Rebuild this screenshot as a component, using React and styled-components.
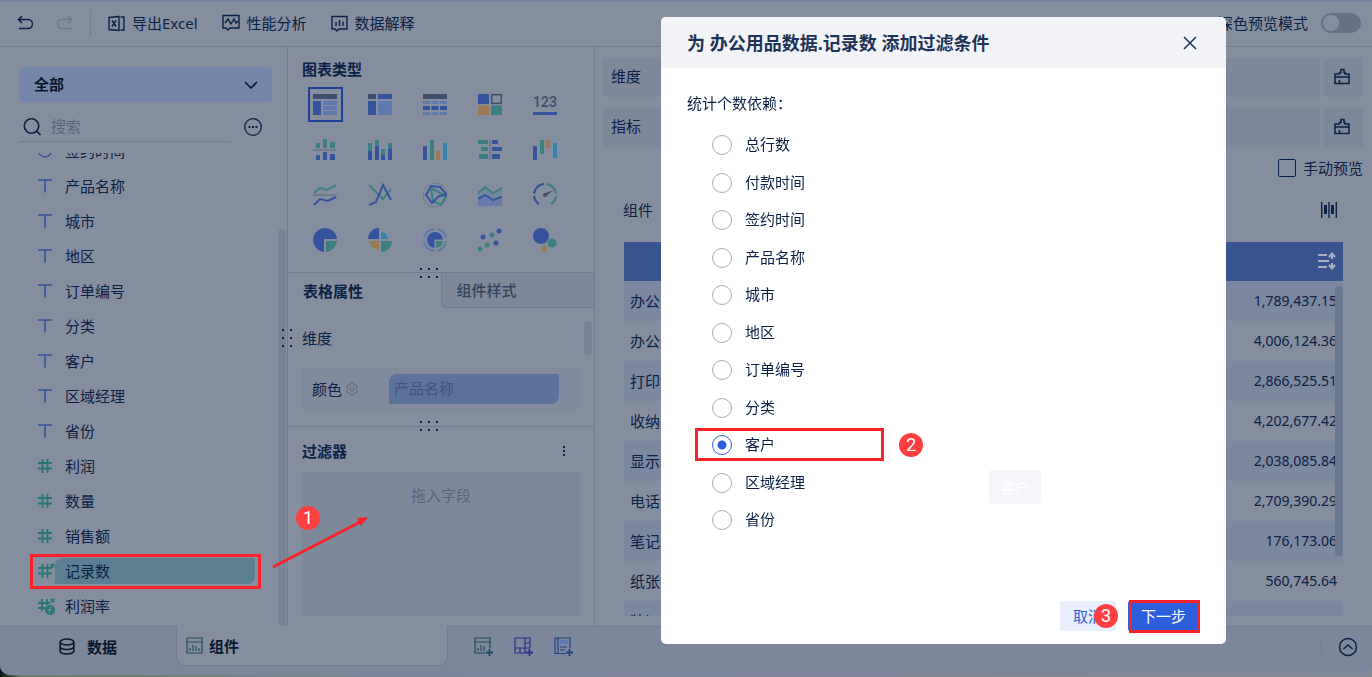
import React, { useState } from 'react';
import styled, { createGlobalStyle } from 'styled-components';

const c = {
  page: '#858e9f',
  sunken: '#7e889b',
  bar: '#7c879b',
  line: '#717d93',
  text: '#0b2146',
  strong: '#08172f',
  muted: '#5f6b83',
  blue: '#35529c',
  light: '#5e78b0',
  teal: '#3b7f82',
  orange: '#9c7a50',
  cyan: '#3683ad',
  slate: '#414e6b',
  gray: '#6f7a90',
  red: '#fa2128',
};

const GlobalStyle = createGlobalStyle`
  * {
    box-sizing: border-box;
  }

  body {
    margin: 0;
    font-family: 'Noto Sans', 'Noto Sans CJK SC', sans-serif;
    font-size: 15px;
    line-height: 20px;
    color: ${c.text};
    background: linear-gradient(90deg, #0a1614, #6d7c6c 20px, #7d8793 400px, #848c92);
  }

  button, input, select {
    font: inherit;
    color: inherit;
  }

  button {
    padding: 0;
    border: 0;
    background: none;
    cursor: pointer;
  }

  svg {
    display: block;
    flex: none;
  }
`;

const Shell = styled.div`
  height: calc(100vh - 2px);
  display: flex;
  flex-direction: column;
  background: ${c.page};
  border-radius: 0 0 10px 10px;
  overflow: hidden;
`;

/* toolbar */

const Toolbar = styled.header`
  height: 47px;
  flex: none;
  display: flex;
  align-items: center;
  gap: 24px;
  padding: 0 11px 2px 17px;
  border-top: 2px solid #7883a0;
  border-bottom: 1px solid ${c.line};
`;

const ToolButton = styled.button`
  display: flex;
  align-items: center;
  gap: 7px;
  color: ${(p) => (p.$off ? c.gray : 'inherit')};
`;

const Divider = styled.span`
  width: 1px;
  height: ${(p) => p.$h || 26}px;
  background: ${c.line};
  margin: 0 ${(p) => p.$m || 0}px;
`;

const SwitchLabel = styled.label`
  margin-left: auto;
  display: flex;
  align-items: center;
  gap: 13px;
  white-space: nowrap;
`;

const Switch = styled.input`
  appearance: none;
  margin: 0;
  width: 40px;
  height: 20px;
  padding: 2px;
  border-radius: 10px;
  background: #667188;

  &::before {
    content: '';
    display: block;
    width: 16px;
    height: 16px;
    border-radius: 50%;
    background: ${c.page};
  }
`;

/* columns */

const Main = styled.main`
  flex: 1;
  min-height: 0;
  display: flex;
`;

const FieldPanel = styled.aside`
  position: relative;
  width: 288px;
  flex: none;
  display: flex;
  flex-direction: column;
  padding: 20px 0 0 19px;
  border-right: 1px solid ${c.line};
`;

const SelectWrap = styled.div`
  display: grid;
  align-items: center;
  width: 253px;
  height: 35px;
  border-radius: 4px;
  background: #7487ab;
  color: ${c.strong};

  > * {
    grid-area: 1 / 1;
  }

  svg {
    justify-self: end;
    margin-right: 14px;
    pointer-events: none;
  }
`;

const Select = styled.select`
  appearance: none;
  height: 35px;
  padding: 0 15px 2px;
  border: 0;
  background: none;
  font-weight: 600;
`;

const SearchRow = styled.div`
  display: flex;
  align-items: center;
  gap: 14px;
  margin-top: 10px;
  height: 30px;
`;

const SearchBox = styled.label`
  width: 211px;
  height: 30px;
  display: flex;
  align-items: center;
  gap: 10px;
  padding-left: 4px;
  border-bottom: 1px solid ${c.line};

  input {
    width: 150px;
    padding: 0 0 2px;
    border: 0;
    outline: 0;
    background: none;
  }

  input::placeholder {
    color: #5a6780;
  }
`;

const FieldView = styled.div`
  flex: 1;
  min-height: 0;
  display: flex;
  align-items: flex-end;
  overflow: hidden;
  margin-top: 11px;
`;

const FieldList = styled.ul`
  align-self: flex-start;
  width: 231px;
  margin: -20px 17px 0 11px;
  padding: 0;
  list-style: none;
`;

const Field = styled.li`
  position: relative;
  height: 35px;
  display: flex;
  align-items: center;
  padding: 0 6px 0 8px;

  svg {
    width: 17px;
    margin-top: 2px;
    color: ${(p) => (p.$number ? '#287476' : c.blue)};
  }

  span {
    flex: 1;
    height: 26px;
    line-height: 26px;
    padding-left: 10px;
    border-radius: 8px 0 8px 0;
    background: ${(p) => (p.$active ? '#5a7f90' : 'none')};
  }
`;

const Thumb = styled.div`
  width: 8px;
  height: ${(p) => p.$h}px;
  border-radius: 4px;
  background: #788398;
`;

const Grip = styled.div`
  position: absolute;
  left: ${(p) => p.$x};
  top: ${(p) => p.$y};
  display: grid;
  grid-template-columns: repeat(${(p) => p.$cols}, 2px);
  gap: 6px;

  i {
    width: 2px;
    height: 2px;
    background: ${c.text};
  }
`;

/* chart settings */

const SetupPanel = styled.section`
  width: 307px;
  flex: none;
  display: flex;
  flex-direction: column;
  border-right: 1px solid ${c.line};
`;

const Heading = styled.h2`
  margin: 0;
  font-size: 15px;
  line-height: 20px;
  font-weight: 600;
`;

const ChartBlock = styled.div`
  position: relative;
  height: 226px;
  padding: 12px 14px 0;
  border-bottom: 1px solid ${c.line};
`;

const ChartRow = styled.div`
  display: flex;
  gap: 11px;
  padding-top: 3px;
`;

const ChartGrid = styled.div`
  display: grid;
  grid-template-columns: repeat(5, 55px);
  grid-auto-rows: 45px;
  place-items: center;
  margin-left: -4px;
`;

const ChartButton = styled.button`
  width: 35px;
  height: 35px;
  display: grid;
  align-items: center;
  padding-left: 3px;
  border: 2px solid ${(p) => (p.$active ? '#1d419b' : 'transparent')};
`;

const Tabs = styled.div`
  display: flex;
  height: 35px;
`;

const Tab = styled.button`
  flex: 1;
  padding: 0 15px;
  text-align: left;
  font-weight: ${(p) => (p.$active ? 600 : 500)};
  color: ${(p) => (p.$active ? c.text : '#35435f')};
  background: ${(p) => (p.$active ? 'none' : c.sunken)};
  border: solid ${c.line};
  border-width: ${(p) => (p.$active ? '0' : '0 0 1px 1px')};
  border-radius: 0 0 0 6px;
`;

const AttrBlock = styled.div`
  position: relative;
  height: 119px;
  padding: 13px 2px 0 14px;
  display: flex;
  justify-content: space-between;
  border-bottom: 1px solid ${c.line};
`;

const AttrGroup = styled.div`
  padding-top: 7px;
`;

const ColorRow = styled.div`
  width: 277px;
  height: 42px;
  margin-top: 20px;
  display: flex;
  align-items: center;
  padding: 0 20px 0 10px;
  gap: 3px;
  background: #818b9d;
`;

const Chip = styled.span`
  width: 170px;
  height: 30px;
  margin-left: auto;
  padding: 4px 5px;
  border-radius: 8px 0 8px 0;
  background: #5b7299;
  color: #43557c;
`;

const FilterBlock = styled.div`
  flex: 1;
  display: flex;
  flex-direction: column;
  gap: 11px;
  padding: 14px 14px 10px;
`;

const FilterHead = styled.div`
  display: flex;
  align-items: center;
  justify-content: space-between;
  padding-right: 14px;
`;

const DropZone = styled.div`
  position: relative;
  flex: 1;
  padding-top: 13px;
  text-align: center;
  color: #5a6680;
  background: ${c.sunken};
`;

/* preview */

const Preview = styled.section`
  flex: 1;
  min-width: 0;
  display: flex;
  flex-direction: column;
  padding: 11px 9px 10px 8px;
`;

const Shelf = styled.div`
  display: flex;
  gap: 4px;
  height: 39px;
  margin-bottom: 11px;
`;

const ShelfBody = styled.div`
  flex: 1;
  padding: 8px;
  background: ${c.sunken};
`;

const ShelfButton = styled.button`
  width: 39px;
  display: flex;
  justify-content: center;
  padding: 10px 3px 0 0;
  background: ${c.sunken};
`;

const CheckLabel = styled.label`
  align-self: flex-end;
  display: flex;
  align-items: center;
  gap: 7px;
`;

const Check = styled.input`
  appearance: none;
  width: 18px;
  height: 18px;
  margin: 0;
  border: 1px solid ${c.text};
  border-radius: 2px;
`;

const PreviewHead = styled.div`
  display: flex;
  align-items: center;
  justify-content: space-between;
  padding: 22px 26px 22px 20px;
`;

const TableView = styled.div`
  flex: 1;
  min-height: 0;
  display: grid;
  grid-template-rows: minmax(0, 1fr);
  margin: 0 20px 0 21px;
  overflow: hidden;

  > * {
    grid-area: 1 / 1;
  }

  ${Thumb} {
    justify-self: end;
    margin-top: 44px;
    background: #6a7790;
  }
`;

const Table = styled.table`
  width: 100%;
  align-self: start;
  border-collapse: collapse;

  th {
    height: 39px;
    padding: 0 7px 2px;
    background: #38538e;
    color: #a9b0bd;
  }

  th svg {
    margin-left: auto;
  }

  td {
    height: 40px;
    padding: 0 6px;
  }

  td:last-child {
    font-size: 14px;
    text-align: right;
  }

  tbody tr:nth-child(odd) {
    background: #7c87a0;
  }
`;

/* bottom bar */

const BottomBar = styled.footer`
  height: 49px;
  flex: none;
  display: flex;
  align-items: flex-start;
  background: ${c.bar};
`;

const SheetTab = styled.button`
  width: ${(p) => (p.$active ? 272 : 176)}px;
  height: 40px;
  display: flex;
  align-items: center;
  justify-content: ${(p) => (p.$active ? 'flex-start' : 'center')};
  gap: ${(p) => (p.$active ? 6 : 12)}px;
  padding-left: ${(p) => (p.$active ? 9 : 0)}px;
  font-weight: 600;
  color: ${c.strong};
  background: ${(p) => (p.$active ? c.page : 'none')};
  border: solid ${c.line};
  border-width: ${(p) => (p.$active ? '0 1px 1px' : '1px 0 0')};
  border-radius: ${(p) => (p.$active ? '0 0 8px 8px' : '0')};
`;

const SheetTools = styled.div`
  flex: 1;
  height: 40px;
  display: flex;
  align-items: center;
  gap: 20px;
  padding: 0 14px 0 26px;
  border-top: 1px solid ${c.line};

  ${Divider} {
    margin: 0 -4px 0 auto;
  }
`;

/* dialog */

const Backdrop = styled.div`
  position: fixed;
  inset: 0;
  display: flex;
  justify-content: flex-end;
  padding: 17px 146px 33px;
`;

const Dialog = styled.form`
  width: 565px;
  display: flex;
  flex-direction: column;
  background: #fff;
  border-radius: 5px;
  overflow: hidden;
`;

const DialogHead = styled.div`
  height: 51px;
  flex: none;
  display: flex;
  align-items: center;
  justify-content: space-between;
  padding: 0 29px 0 26px;
  background: #f2f3f7;
  color: #1f3358;

  h1 {
    margin: 0;
    font-size: 18px;
    line-height: 24px;
    font-weight: 700;
  }
`;

const Options = styled.fieldset`
  position: relative;
  flex: 1;
  margin: 0;
  padding: 25px 26px 0;
  border: 0;

  legend {
    float: left;
    width: 100%;
    padding: 0;
    margin-bottom: 22px;
  }
`;

const OptionList = styled.div`
  clear: both;
  height: 395px;
  display: flex;
  flex-direction: column;
  align-items: flex-start;
  justify-content: space-between;
  padding-left: 25px;
`;

const Option = styled.label`
  position: relative;
  display: flex;
  align-items: center;
  gap: 13px;
  height: 20px;
  line-height: 18px;

  span {
    height: 20px;
  }
`;

const Radio = styled.input`
  appearance: none;
  width: 20px;
  height: 20px;
  margin: 0;
  border: 1px solid #a3aabb;
  border-radius: 50%;

  &:checked {
    border-color: #2d5fdc;
    background: radial-gradient(circle, #2d5fdc 4px, transparent 5px);
  }
`;

const Hint = styled.span`
  position: absolute;
  right: 185px;
  top: 402px;
  padding: 7px 11px;
  border-radius: 3px;
  background: #f5f6f9;
  color: #fff;
`;

const DialogFoot = styled.div`
  display: flex;
  justify-content: flex-end;
  gap: 12px;
  padding: 0 27px 13px;
`;

const Action = styled.button`
  position: relative;
  height: 30px;
  padding: 0 13px;
  border-radius: 2px;
  background: ${(p) => (p.$primary ? '#2b5fdb' : '#e8eefb')};
  color: ${(p) => (p.$primary ? '#fff' : '#2b5fdb')};
`;

/* step marks */

const Frame = styled.div`
  position: absolute;
  inset: ${(p) => p.$inset || '0'};
  border: 3px solid ${c.red};
  pointer-events: none;
`;

const Step = styled.b`
  position: absolute;
  left: ${(p) => p.$x}px;
  top: ${(p) => p.$y}px;
  width: 24px;
  height: 24px;
  border-radius: 50%;
  background: #ff4043;
  color: #fff;
  font: 18px/24px Roboto, sans-serif;
  text-align: center;
`;

const Arrow = styled.svg`
  position: absolute;
  left: -30px;
  top: 42px;
`;

const Icon = ({ w = 18, h, sw = 1.4, children }) => (
  <svg width={w} height={h || w} viewBox={`0 0 ${w} ${h || w}`} fill="none" stroke="currentColor" strokeWidth={sw}>
    {children}
  </svg>
);

const TextIcon = () => (
  <Icon w={17} sw={1.6}>
    <path d="M0 2h14M7 2v12.5" />
  </Icon>
);

const DateIcon = () => (
  <Icon w={17}>
    <circle cx="7" cy="7.500" r="6.500" />
    <path d="M7 4v4h4" />
  </Icon>
);

const NumberIcon = ({ star, calc }) => (
  <Icon w={17} sw={1.8}>
    <path d={calc ? 'M0 5h12M0 10h8M4 1v12M9 1v6' : 'M0 5h14M0 10.500h14M4.500 1v14M9.500 1v14'} />
    {star && <path d="M14.500 0v5M12.300 1.200l4.400 2.600M16.700 1.200l-4.400 2.600" strokeWidth="1.1" />}
    {calc && (
      <>
        <circle cx="12" cy="12" r="5" fill="currentColor" stroke="none" />
        <path d="M13.800 9.500c-2.200-.7-1.800 1.500-2.600 5.500M10 12h3.500" stroke={c.page} strokeWidth="1" />
      </>
    )}
  </Icon>
);

const BrushIcon = () => (
  <Icon w={16} h={17} sw={1.5}>
    <path d="M1 15.500V6h4.500V4.500H7V1.500h3v3h1V6h4v9.500zM1 9h14M5.500 12v3.500" />
  </Icon>
);

const PlusMark = () => <path d="M15.500 12v7M12 15.500h7" strokeWidth="1.800" />;

// x, y, w, h, colour
const bars = (list) => list.map(([x, y, w, h, f], i) => <rect key={i} x={x} y={y} width={w} height={h} fill={f} />);
const line = (points, stroke) => <polyline points={points} fill="none" stroke={stroke} strokeWidth="2" />;

const charts = [
  ['分组表', bars([[0, 1, 24, 5, c.slate], [0, 8, 8, 14, c.blue], [10, 8, 14, 4, c.light], [10, 13, 14, 4, c.light], [10, 18, 14, 4, c.light]])],
  ['交叉表', bars([[0, 1, 8, 5, c.slate], [10, 1, 14, 5, c.blue], [0, 8, 8, 14, c.blue], [10, 8, 14, 14, c.light]])],
  ['明细表', bars([
    [0, 1, 24, 5, c.slate],
    ...[0, 8.5, 17].flatMap((x) => [[x, 8, 7, 3, c.light], [x, 13, 7, 4, c.blue], [x, 19, 7, 3, c.light]]),
  ])],
  ['颜色表格', <>
    {bars([[0, 1, 11, 10, c.blue], [0, 12.5, 11, 9.5, c.orange], [13, 12.5, 11, 9.5, c.teal]])}
    <rect x="13.700" y="1.700" width="9.600" height="8.600" fill="none" stroke={c.slate} strokeWidth="1.500" />
  </>],
  ['KPI 指标卡', <>
    <text x="12" y="14" textAnchor="middle" fontFamily="Roboto" fontWeight="500" fontSize="14" fill={c.slate}>123</text>
    {bars([[0, 19, 24, 3, c.blue]])}
  </>],
  ['对比柱状图', bars([[3, 5, 4, 5, c.teal], [10, 1, 4, 9, c.teal], [17, 4, 5, 6, c.teal], [0, 11, 23, 2, c.gray], [3, 17, 4, 5, c.blue], [10, 14, 4, 8, c.blue], [17, 16, 5, 6, c.blue]])],
  ['堆积柱状图', bars([[0, 5, 4, 8, c.teal], [0, 13, 4, 9, c.blue], [7, 2, 4, 6, c.teal], [7, 8, 4, 14, c.blue], [13, 11, 4, 6, c.teal], [13, 17, 4, 5, c.blue], [20, 5, 4, 6, c.teal], [20, 11, 4, 11, c.blue]])],
  ['分区柱形图', bars([[0, 8, 4, 14, c.blue], [7, 2, 4, 20, c.teal], [13, 13, 4, 9, c.orange], [20, 5, 4, 17, c.cyan]])],
  ['对比条形图', bars([[0, 2, 10, 4, c.teal], [3, 9, 7, 4, c.teal], [1, 16, 9, 5, c.teal], [11, 1, 2, 21, c.gray], [14, 2, 6, 4, c.blue], [14, 9, 10, 4, c.blue], [14, 16, 8, 5, c.blue]])],
  ['瀑布图', bars([[0, 8, 4, 14, c.blue], [7, 2, 4, 14, c.teal], [13, 2, 4, 8, c.orange], [20, 5, 4, 15, c.cyan]])],
  ['范围面积图', <>
    {line('1,10 7,5 14,7 23,2', c.teal)}
    {bars([[0, 11, 24, 2, c.gray]])}
    {line('1,22 7,16 15,18 23,14', c.blue)}
  </>],
  ['折线图', <>{line('1,2 15,16 23,6', c.teal)}{line('1,22 8,19 15,2 23,17', c.blue)}</>],
  ['雷达图', <>
    <circle cx="12" cy="12" r="12" fill="none" stroke={c.gray} />
    <path d="M8 5l15 8-5 9-8-4z" fill="none" stroke={c.teal} strokeWidth="2" />
    <path d="M3 12L8 3l9 1 7 8-8 1-7 7z" fill="none" stroke={c.blue} strokeWidth="2" />
  </>],
  ['面积图', <>
    <path d="M0 10l7-6 8 6 9-6v11H0z" fill="#6f8a98" />
    <path d="M0 16l7-3 8 4 9-3v9H0z" fill="#667ba9" />
    {line('0,10 7,4 15,10 24,5', c.teal)}
    {line('0,16 7,12 15,17 24,14', c.blue)}
  </>],
  ['仪表盘', <>
    <g fill="none" strokeWidth="2.200">
      <path d="M6 21A11 11 0 0 1 1 13M1 10.500A11 11 0 0 1 11 1" stroke={c.blue} />
      <path d="M13.500 1A11 11 0 0 1 23 10.500M23 13a11 11 0 0 1-5 8" stroke={c.teal} />
    </g>
    <path d="M11 10.500l9-3-7.500 6z" fill={c.slate} />
    <circle cx="12" cy="12" r="2" fill={c.slate} />
  </>],
  ['饼图', <>
    <path d="M11 24A12 12 0 1 1 24 11H11z" fill={c.blue} />
    <path d="M13 13h11a12 12 0 0 1-11 11z" fill={c.teal} />
  </>],
  ['玫瑰图', <>
    <path d="M11 11H0A11 11 0 0 1 11 0z" fill={c.blue} />
    <path d="M13 11V4a7 7 0 0 1 7 7z" fill={c.cyan} />
    <path d="M11 13v9a9 9 0 0 1-9-9z" fill={c.orange} />
    <path d="M13 13h11a11 11 0 0 1-11 11z" fill={c.teal} />
  </>],
  ['多层饼图', <>
    <g fill="none" strokeWidth="2">
      <path d="M11 23A11 11 0 0 1 1 13M1 10A11 11 0 0 1 11 1M14 1a11 11 0 0 1 9 9" stroke={c.light} />
      <path d="M23 13a11 11 0 0 1-9 10" stroke="#598094" />
    </g>
    <path d="M11.500 20A8 8 0 1 1 20 11.500h-8.500z" fill={c.blue} />
    <path d="M13 13h7a8 8 0 0 1-7 7z" fill={c.teal} />
  </>],
  ['散点图', [[2, 21, 0], [5, 9, 1], [9, 17, 0], [14, 7, 0], [18, 15, 1], [21, 3, 1]].map(([x, y, b]) => (
    <circle key={x} cx={x} cy={y} r="2.500" fill={b ? c.blue : c.teal} />
  ))],
  ['聚合气泡图', <>
    <circle cx="8" cy="8" r="8" fill={c.blue} />
    <circle cx="19" cy="15" r="4.500" fill={c.teal} />
    <circle cx="11" cy="20.500" r="3" fill={c.orange} />
  </>],
];

const fields = [
  ['签约时间', <DateIcon />],
  ['产品名称', <TextIcon />],
  ['城市', <TextIcon />],
  ['地区', <TextIcon />],
  ['订单编号', <TextIcon />],
  ['分类', <TextIcon />],
  ['客户', <TextIcon />],
  ['区域经理', <TextIcon />],
  ['省份', <TextIcon />],
  ['利润', <NumberIcon />, true],
  ['数量', <NumberIcon />, true],
  ['销售额', <NumberIcon />, true],
  ['记录数', <NumberIcon star />, true],
  ['利润率', <NumberIcon star calc />, true],
];

const options = ['总行数', '付款时间', '签约时间', '产品名称', '城市', '地区', '订单编号', '分类', '客户', '区域经理', '省份'];

const rows = [
  ['办公桌椅', '1,789,437.15'],
  ['办公装订', '4,006,124.36'],
  ['打印机', '2,866,525.51'],
  ['收纳具', '4,202,677.42'],
  ['显示器', '2,038,085.84'],
  ['电话', '2,709,390.29'],
  ['笔记本', '176,173.06'],
  ['纸张', '560,745.64'],
  ['装订机', ''],
];

const Dots = ({ cols, x, y }) => (
  <Grip $cols={cols} $x={x} $y={y}>
    {[1, 2, 3, 4, 5, 6].map((n) => <i key={n} />)}
  </Grip>
);

const App = () => {
  const [picked, setPicked] = useState('客户');

  return (
    <>
      <GlobalStyle />
      <Shell>
        <Toolbar>
          <ToolButton aria-label="撤销">
            <Icon w={16} sw={1.6}><path d="M5 1L1.500 4.500 5 8M1.500 4.500H11a4.500 4.500 0 0 1 0 9H2" /></Icon>
          </ToolButton>
          <ToolButton $off aria-label="重做">
            <Icon w={16} sw={1.6}><path d="M11 1l3.500 3.500L11 8M14.500 4.500H5a4.500 4.500 0 0 0 0 9h9" /></Icon>
          </ToolButton>
          <Divider $m={-7} />
          <ToolButton>
            <Icon w={17}><path d="M11 1.500L1 2.500v12l10 1zM12.500 2H16v13h-3.500M4 5.500l4 6M8 5.500l-4 6" /></Icon>
            导出Excel
          </ToolButton>
          <ToolButton>
            <Icon w={18}><path d="M1 1.500h16V14H8l-2 2-2-2H1zM3 9l3-4 3 5 3-5 2 4 2-2" /></Icon>
            性能分析
          </ToolButton>
          <ToolButton>
            <Icon w={17}><path d="M1 1.500h15V14H8l-2 2-2-2H1zM5 7v4M8.500 5v6M12 6.500V11" /></Icon>
            数据解释
          </ToolButton>
          <SwitchLabel>
            深色预览模式
            <Switch type="checkbox" role="switch" />
          </SwitchLabel>
        </Toolbar>

        <Main>
          <FieldPanel>
            <SelectWrap>
              <Select aria-label="数据表">
                <option>全部</option>
              </Select>
              <Icon w={14} h={8} sw={1.6}><path d="M1 1l6 6 6-6" /></Icon>
            </SelectWrap>
            <SearchRow>
              <SearchBox>
                <Icon w={18} sw={1.6}><circle cx="8.500" cy="8" r="7.200" /><path d="M13.500 13l4 4" /></Icon>
                <input type="search" placeholder="搜索" aria-label="搜索" />
              </SearchBox>
              <ToolButton aria-label="更多">
                <Icon w={18} sw={1.3}>
                  <circle cx="9" cy="9" r="8.300" />
                  <path d="M4.500 9h2M8 9h2M11.500 9h2" strokeWidth="2" />
                </Icon>
              </ToolButton>
            </SearchRow>
            <FieldView>
              <FieldList>
                {fields.map(([name, icon, number]) => (
                  <Field key={name} $number={number} $active={name === '记录数'}>
                    {icon}
                    <span>{name}</span>
                    {name === '记录数' && <Frame $inset="1px 0 -1px" />}
                  </Field>
                ))}
              </FieldList>
              <Thumb $h={397} />
            </FieldView>
            <Dots cols={2} x="282px" y="calc(50% - 8px)" />
          </FieldPanel>

          <SetupPanel>
            <ChartBlock>
              <Heading>图表类型</Heading>
              <ChartRow>
                <ChartGrid>
                  {charts.map(([name, art], i) => (
                    <ChartButton key={name} $active={i === 0} aria-label={name}>
                      <svg width="24" height="24" viewBox="0 0 24 24">{art}</svg>
                    </ChartButton>
                  ))}
                </ChartGrid>
                <Thumb $h={93} style={{ marginTop: 7 }} />
              </ChartRow>
              <Dots cols={3} x="132px" y="221px" />
            </ChartBlock>
            <Tabs>
              <Tab $active>表格属性</Tab>
              <Tab>组件样式</Tab>
            </Tabs>
            <AttrBlock>
              <AttrGroup>
                维度
                <ColorRow>
                  颜色
                  <Icon w={14} sw={1}><path d="M7 1l5 3v6l-5 3-5-3V4z" stroke={c.muted} /><circle cx="7" cy="7" r="2" stroke={c.muted} /></Icon>
                  <Chip>产品名称</Chip>
                </ColorRow>
              </AttrGroup>
              <Thumb $h={34} />
              <Dots cols={3} x="132px" y="113px" />
            </AttrBlock>
            <FilterBlock>
              <FilterHead>
                <Heading>过滤器</Heading>
                <ToolButton aria-label="过滤器菜单">
                  <Icon w={4} h={14} sw={2}><path d="M2 2v2M2 6v2M2 10v2" /></Icon>
                </ToolButton>
              </FilterHead>
              <DropZone>
                拖入字段
                <Step $x={-6} $y={34}>1</Step>
                <Arrow width="100" height="58" viewBox="0 0 100 58">
                  <path d="M1 53L90 7" stroke={c.red} strokeWidth="3" />
                  <path d="M96 3l-7 9-4-8z" fill={c.red} />
                </Arrow>
              </DropZone>
            </FilterBlock>
          </SetupPanel>

          <Preview>
            {['维度', '指标'].map((name) => (
              <Shelf key={name}>
                <ShelfBody>{name}</ShelfBody>
                <ShelfButton aria-label={`清空${name}`}><BrushIcon /></ShelfButton>
              </Shelf>
            ))}
            <CheckLabel>
              <Check type="checkbox" />
              手动预览
            </CheckLabel>
            <PreviewHead>
              组件
              <ToolButton aria-label="列宽">
                <Icon w={16} h={18}><path d="M.7 1v16M8 1v16M15.300 1v16" /><path d="M4.500 4v9M11.500 4v9" strokeWidth="3" /></Icon>
              </ToolButton>
            </PreviewHead>
            <TableView>
              <Table>
                <thead>
                  <tr>
                    <th aria-label="产品名称" />
                    <th aria-label="销售额">
                      <Icon w={18} sw={2}><path d="M0 3h9M0 9h11M0 15h9M14 2v5M14 11v5M11 5l3-3.500L17 5M11 13l3 3.500 3-3.500" /></Icon>
                    </th>
                  </tr>
                </thead>
                <tbody>
                  {rows.map(([name, value]) => (
                    <tr key={name}>
                      <td>{name}</td>
                      <td>{value}</td>
                    </tr>
                  ))}
                </tbody>
              </Table>
              <Thumb $h={270} />
            </TableView>
          </Preview>
        </Main>

        <BottomBar>
          <SheetTab>
            <Icon w={16} h={17} sw={1.6}>
              <ellipse cx="8" cy="4" rx="6.800" ry="3" />
              <path d="M1.200 4v9c0 4 13.600 4 13.600 0V4M1.200 8.500c0 4 13.600 4 13.600 0" />
            </Icon>
            数据
          </SheetTab>
          <SheetTab $active>
            <Icon w={17} sw={1.2}><g stroke="#1f4c58"><path d="M1 1h15v15H1zM1 5h15M4 14v-3M7 14V8M10 14V9M13 14v-3" /></g></Icon>
            组件
          </SheetTab>
          <SheetTools>
            <ToolButton aria-label="添加组件">
              <Icon w={20} sw={1.2}><g stroke="#1a4b5c"><path d="M12 16H1V1h15v10M1 5h15M4 14v-3M7 14V8M10 14V9" /><PlusMark /></g></Icon>
            </ToolButton>
            <ToolButton aria-label="添加仪表板">
              <Icon w={20} sw={1.2}><g stroke="#2c2f86"><path d="M12 16H1V1h15v10M11 1v15M1 11h15M6 11v5M11 6h5" /><PlusMark /></g></Icon>
            </ToolButton>
            <ToolButton aria-label="添加报告">
              <Icon w={20} sw={1.2}>
                <g stroke="#1f4282"><path d="M12 16.500H1V1h15v10M4 1v15M6 10h7M6 13h5" /><path d="M6 5h8" strokeWidth="4" stroke={c.light} /><PlusMark /></g>
              </Icon>
            </ToolButton>
            <Divider $h={16} />
            <ToolButton aria-label="展开">
              <Icon w={20} sw={1.5}><circle cx="10" cy="10" r="8.500" /><path d="M5.500 12L10 8l4.500 4" /></Icon>
            </ToolButton>
          </SheetTools>
        </BottomBar>
      </Shell>

      <Backdrop>
        <Dialog role="dialog" aria-labelledby="dialog-title" onSubmit={(e) => e.preventDefault()}>
          <DialogHead>
            <h1 id="dialog-title">为 办公用品数据.记录数 添加过滤条件</h1>
            <ToolButton type="button" aria-label="关闭">
              <Icon w={14} sw={1.5}><path d="M1 1l12 12M13 1L1 13" /></Icon>
            </ToolButton>
          </DialogHead>
          <Options>
            <legend>统计个数依赖：</legend>
            <OptionList>
              {options.map((name) => (
                <Option key={name}>
                  <Radio type="radio" name="basis" checked={picked === name} onChange={() => setPicked(name)} />
                  <span>{name}</span>
                  {name === '客户' && (
                    <>
                      <Frame $inset="-7px -109px -6px -17px" />
                      <Step $x={187} $y={-2}>2</Step>
                    </>
                  )}
                </Option>
              ))}
            </OptionList>
            <Hint>客户</Hint>
          </Options>
          <DialogFoot>
            <Action type="button">
              取消
              <Step $x={34} $y={3}>3</Step>
            </Action>
            <Action $primary type="submit">
              下一步
              <Frame $inset="-1px -1px -2px 1px" />
            </Action>
          </DialogFoot>
        </Dialog>
      </Backdrop>
    </>
  );
};

export default App;
